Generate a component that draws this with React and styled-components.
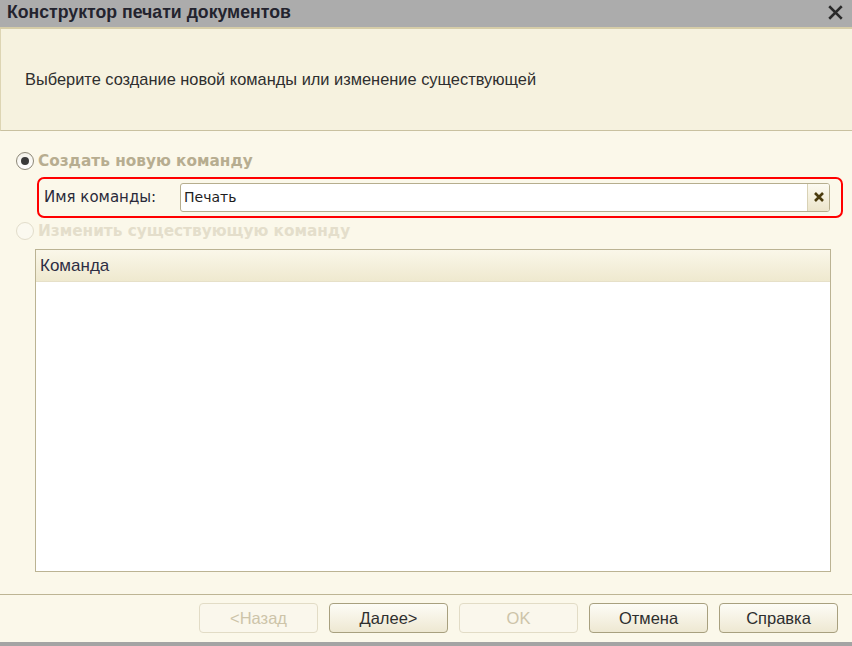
import React from "react";
import styled, { createGlobalStyle } from "styled-components";

const GlobalStyle = createGlobalStyle`
  html, body {
    margin: 0;
    padding: 0;
    background: #fbf8ea;
  }
  * {
    box-sizing: border-box;
  }
`;

const Window = styled.div`
  width: 852px;
  height: 646px;
  display: flex;
  flex-direction: column;
  background: #fbf8ea;
  font-family: "Liberation Sans", Arial, sans-serif;
  color: #2b2b2b;
  overflow: hidden;
`;

const TitleBar = styled.div`
  height: 29px;
  flex: none;
  display: flex;
  align-items: center;
  justify-content: space-between;
  padding: 0 5px 2px 7px;
  background: #acacac;
  border-bottom: 2px solid #d6cda8;
`;

const Title = styled.div`
  font-size: 17.7px;
  font-weight: bold;
  color: #23232e;
`;

const CloseIcon = styled.svg`
  width: 15px;
  height: 15px;
  margin-right: 4px;
`;

const Header = styled.div`
  height: 102px;
  flex: none;
  display: flex;
  align-items: center;
  padding-left: 24px;
  background: #f6f2df;
  border-left: 1px solid #ddd5b3;
  border-bottom: 1px solid #c9c1a0;
  font-size: 16.4px;
  color: #2e2e2e;
`;

const Body = styled.div`
  flex: 1;
  display: flex;
  flex-direction: column;
  padding: 21px 9px 0 16px;
`;

const RadioRow = styled.div`
  display: flex;
  align-items: center;
  gap: 4px;
  height: 18px;
  margin-top: ${(p) => p.$mt || 0}px;
  font-family: "DejaVu Sans", Verdana, sans-serif;
  font-weight: bold;
  font-size: 15.3px;
  color: ${(p) => (p.$checked ? "#b7ad90" : "#e4decb")};
`;

const RadioCircle = styled.span`
  width: 18px;
  height: 18px;
  border-radius: 50%;
  flex: none;
  display: flex;
  align-items: center;
  justify-content: center;
  border: 1.5px solid ${(p) => (p.$checked ? "#8d8878" : "#e2ddcb")};
  background: ${(p) =>
    p.$checked ? "linear-gradient(#f4f2ea, #ffffff)" : "#fbf9f0"};

  &::after {
    content: "";
    display: ${(p) => (p.$checked ? "block" : "none")};
    width: 8px;
    height: 8px;
    border-radius: 50%;
    background: #3a3a3a;
  }
`;

const Highlight = styled.div`
  margin: 7px 0 0 21px;
  height: 41px;
  display: flex;
  align-items: center;
  padding: 0 11px 1px 5px;
  border: 2px solid #ff0000;
  border-radius: 7px;
`;

const FieldLabel = styled.div`
  width: 136px;
  flex: none;
  font-family: "DejaVu Sans", Verdana, sans-serif;
  font-size: 15px;
  color: #2a2a3a;
`;

const Input = styled.div`
  flex: 1;
  height: 29px;
  display: flex;
  align-items: stretch;
  border: 1px solid #b6ae8e;
  border-radius: 3px;
  background: #fff;
  overflow: hidden;
`;

const InputText = styled.div`
  flex: 1;
  display: flex;
  align-items: center;
  padding-left: 3px;
  font-family: "DejaVu Sans", Verdana, sans-serif;
  font-size: 14px;
  color: #1e1e1e;
`;

const ClearButton = styled.div`
  width: 22px;
  flex: none;
  display: flex;
  align-items: center;
  justify-content: center;
  border-left: 1px solid #d9d2b5;
  background: linear-gradient(#fcfaf0, #ece5cb);
`;

const Table = styled.div`
  margin: 9px 12px 0 19px;
  height: 323px;
  display: flex;
  flex-direction: column;
  border: 1.5px solid #bbb393;
  background: #fff;
`;

const TableHead = styled.div`
  height: 32px;
  flex: none;
  display: flex;
  align-items: center;
  padding-left: 4px;
  background: linear-gradient(#faf7e9, #efe9cf);
  border-bottom: 1px solid #e6e0c8;
  font-size: 17px;
  color: #2e2e44;
`;

const Footer = styled.div`
  height: 48px;
  flex: none;
  display: flex;
  justify-content: flex-end;
  align-items: flex-start;
  gap: 11px;
  padding: 8px 14px 0 0;
  border-top: 1px solid #bdb594;
`;

const Button = styled.div`
  width: 119px;
  height: 30px;
  display: flex;
  align-items: center;
  justify-content: center;
  border-radius: 4px;
  font-size: 16.5px;
  border: 1px solid ${(p) => (p.$disabled ? "#e2dcc6" : "#a8a07f")};
  color: ${(p) => (p.$disabled ? "#cdc4a9" : "#2e2e2e")};
  background: ${(p) =>
    p.$disabled ? "#faf7ec" : "linear-gradient(#fdfcf6, #eee8d2)"};
`;

const BottomBar = styled.div`
  height: 4px;
  flex: none;
  background: #a4a4a4;
`;

const buttons = [
  { label: "<Назад", disabled: true },
  { label: "Далее>" },
  { label: "OK", disabled: true },
  { label: "Отмена" },
  { label: "Справка" },
];

export default function App() {
  return (
    <>
      <GlobalStyle />
      <Window>
        <TitleBar>
          <Title>Конструктор печати документов</Title>
          <CloseIcon viewBox="0 0 14 14">
            <path
              d="M2 2 L12 12 M12 2 L2 12"
              stroke="#2a2a2a"
              strokeWidth="2.4"
              strokeLinecap="square"
              fill="none"
            />
          </CloseIcon>
        </TitleBar>
        <Header>Выберите создание новой команды или изменение существующей</Header>
        <Body>
          <RadioRow $checked>
            <RadioCircle $checked />
            Создать новую команду
          </RadioRow>
          <Highlight>
            <FieldLabel>Имя команды:</FieldLabel>
            <Input>
              <InputText>Печать</InputText>
              <ClearButton>
                <svg width="12" height="12" viewBox="0 0 12 12">
                  <path
                    d="M2 2 L10 10 M10 2 L2 10"
                    stroke="#4b3c0e"
                    strokeWidth="2.6"
                    fill="none"
                  />
                </svg>
              </ClearButton>
            </Input>
          </Highlight>
          <RadioRow $mt={4}>
            <RadioCircle />
            Изменить существующую команду
          </RadioRow>
          <Table>
            <TableHead>Команда</TableHead>
          </Table>
        </Body>
        <Footer>
          {buttons.map((b) => (
            <Button key={b.label} $disabled={b.disabled}>
              {b.label}
            </Button>
          ))}
        </Footer>
        <BottomBar />
      </Window>
    </>
  );
}
